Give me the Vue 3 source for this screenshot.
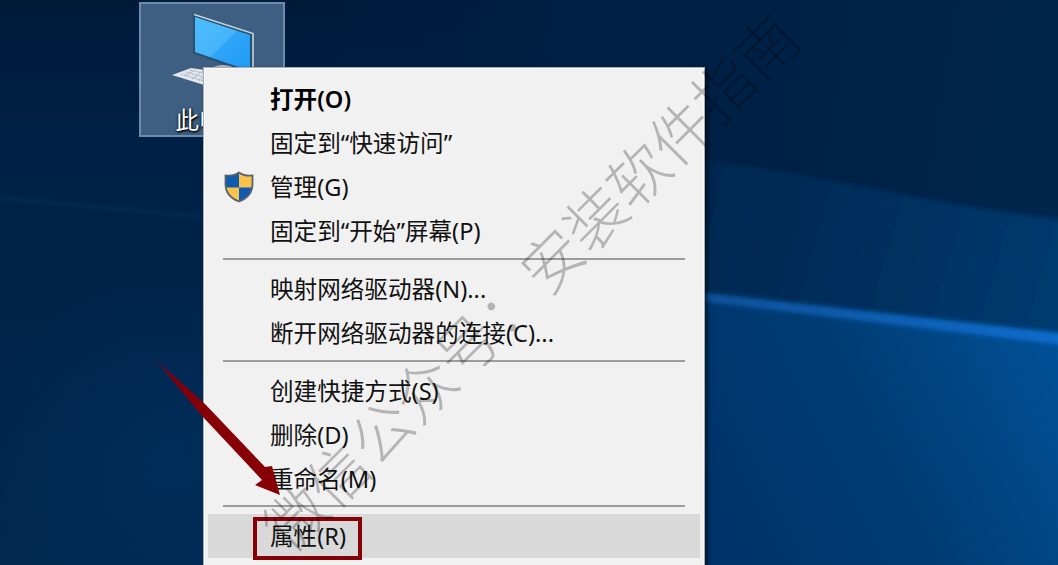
<script setup>
// 右键菜单，按分隔线分组
const groups = [
  [
    { label: '打开(O)', bold: true },
    { label: '固定到“快速访问”' },
    { label: '管理(G)', shield: true },
    { label: '固定到“开始”屏幕(P)' },
  ],
  [
    { label: '映射网络驱动器(N)...' },
    { label: '断开网络驱动器的连接(C)...' },
  ],
  [
    { label: '创建快捷方式(S)' },
    { label: '删除(D)' },
    { label: '重命名(M)' },
  ],
  [{ label: '属性(R)', active: true }],
];
</script>

<template>
  <div class="desktop">
    <!-- 壁纸 -->
    <svg class="wallpaper" viewBox="0 0 1058 565">
      <defs>
        <linearGradient id="base" x1="0" y1="0" x2="0" y2="1">
          <stop offset="0" stop-color="#001a3a" />
          <stop offset="0.25" stop-color="#002045" />
          <stop offset="1" stop-color="#002850" />
        </linearGradient>
        <radialGradient id="left" gradientUnits="userSpaceOnUse" cx="170" cy="460" r="190">
          <stop offset="0" stop-color="#003060" stop-opacity="0.7" />
          <stop offset="1" stop-color="#003060" stop-opacity="0" />
        </radialGradient>
        <linearGradient id="top" gradientUnits="userSpaceOnUse" x1="300" y1="0" x2="1058" y2="120">
          <stop offset="0" stop-color="#001e42" stop-opacity="0" />
          <stop offset="0.35" stop-color="#001f44" />
          <stop offset="0.7" stop-color="#002147" />
          <stop offset="1" stop-color="#00264c" />
        </linearGradient>
        <linearGradient id="mid" gradientUnits="userSpaceOnUse" x1="700" y1="200" x2="1058" y2="300">
          <stop offset="0" stop-color="#002850" />
          <stop offset="0.5" stop-color="#002f5e" />
          <stop offset="1" stop-color="#003b70" />
        </linearGradient>
        <linearGradient id="low" gradientUnits="userSpaceOnUse" x1="700" y1="520" x2="1058" y2="350">
          <stop offset="0" stop-color="#003368" />
          <stop offset="0.5" stop-color="#003c74" />
          <stop offset="1" stop-color="#005096" />
        </linearGradient>
        <linearGradient id="beam" gradientUnits="userSpaceOnUse" x1="700" y1="0" x2="1058" y2="0">
          <stop offset="0" stop-color="#0a5098" />
          <stop offset="1" stop-color="#0a6ccc" />
        </linearGradient>
        <filter id="soft" x="-10%" y="-50%" width="120%" height="200%">
          <feGaussianBlur stdDeviation="2" />
        </filter>
      </defs>
      <rect width="1058" height="565" fill="url(#base)" />
      <rect width="420" height="565" fill="url(#left)" />
      <path d="M300 0H1058V230H300Z" fill="url(#top)" />
      <path d="M690 159Q760 166 880 190T1070 220V360H690Z" fill="url(#mid)" filter="url(#soft)" />
      <path d="M690 296L1070 338V580H690Z" fill="url(#low)" />
      <path d="M690 291L1070 334V346L690 300Z" fill="url(#beam)" filter="url(#soft)" />
      <path d="M0 198L204 217" stroke="#0a3560" stroke-width="5" opacity="0.35" filter="url(#soft)" />
    </svg>

    <!-- 此电脑 -->
    <div class="shortcut">
      <svg class="pc" viewBox="0 0 90 80">
        <defs>
          <linearGradient id="screen" x1="0" y1="0" x2="1" y2="1">
            <stop offset="0" stop-color="#4dbcfb" />
            <stop offset="0.5" stop-color="#46b4fa" />
            <stop offset="0.52" stop-color="#2da5f8" />
            <stop offset="1" stop-color="#229af5" />
          </linearGradient>
        </defs>
        <path d="M22 10L82 29V72L22 49Z" fill="#26516f" />
        <path d="M23 10.500L82 29.500V66" fill="none" stroke="#c5d5de" stroke-width="1.600" />
        <path d="M24 13L79 31V67L24 48Z" fill="url(#screen)" />
        <path d="M40 64Q52 58 64 64L64 70H40Z" fill="#bcb9c8" />
        <path d="M1 71L20 64L48 68V86L30 80Z" fill="#e2e7ed" />
        <path d="M10 70L36 78M15 68L38 75M19 66L40 71M14 72L24 66M21 75L32 67M28 77L38 68" stroke="#a5adb6" stroke-width="1" stroke-dasharray="2 1" />
      </svg>
      <span class="shortcut-name">此电脑</span>
    </div>

    <div class="menu">
      <div v-for="(group, i) in groups" :key="i" class="group">
        <div v-for="item in group" :key="item.label" class="item" :class="{ bold: item.bold, active: item.active }">
          <span class="icon">
            <svg v-if="item.shield" viewBox="0 0 30 32">
              <path d="M15 1.500C11 4.500 6 5 1.500 4.500V13C1.500 22 7 27.500 15 30.500Z" fill="#f9c24c" />
              <path d="M15 1.500C19 4.500 24 5 28.500 4.500V13C28.500 22 23 27.500 15 30.500Z" fill="#0e5bb0" />
              <path d="M15 1.500C11 4.500 6 5 1.500 4.500V13L2 16.500H15Z" fill="#0e5bb0" />
              <path d="M15 1.500C19 4.500 24 5 28.500 4.500V13L28 16.500H15Z" fill="#f9c24c" />
              <path d="M15 1.500C11 4.500 6 5 1.500 4.500V13C1.500 22 7 27.500 15 30.500C23 27.500 28.500 22 28.500 13V4.500C24 5 19 4.500 15 1.500Z" fill="none" stroke="#56636b" stroke-width="1.800" />
            </svg>
          </span>
          <span class="label">{{ item.label }}</span>
        </div>
      </div>
    </div>

    <!-- 红色箭头和方框 -->
    <svg class="arrow" viewBox="0 0 1058 565">
      <defs>
        <linearGradient id="red" gradientUnits="userSpaceOnUse" x1="153" y1="357" x2="205" y2="410">
          <stop offset="0" stop-color="#7a0010" stop-opacity="0.2" />
          <stop offset="0.4" stop-color="#7a0010" />
          <stop offset="1" stop-color="#860006" />
        </linearGradient>
      </defs>
      <path d="M153 357L205 404L265 467L272 466L280 495L255 485L262 480L203 417Z" fill="url(#red)" />
    </svg>
    <div class="frame"></div>

    <div class="watermark">微信公众号：安装软件指南</div>
  </div>
</template>

<style>
body { margin: 0; overflow: hidden; }
</style>

<style scoped>
.desktop { position: relative; width: 1058px; height: 565px; overflow: hidden; font-family: "Noto Sans", "Noto Sans CJK SC", sans-serif; }
.wallpaper, .arrow { position: absolute; left: 0; top: 0; width: 1058px; height: 565px; }

.shortcut { position: absolute; left: 139px; top: 2px; width: 146px; height: 135px; box-sizing: border-box; border: 2px solid #6c8cab; background: #3e5f82; display: flex; flex-direction: column; align-items: center; }
.pc { width: 90px; height: 80px; margin-left: 8px; overflow: visible; }
.shortcut-name { margin-top: 19px; margin-right: 4px; color: #fff; font-size: 23.5px; line-height: 34px; letter-spacing: -0.5px; text-shadow: 1px 1px 2px #000, 0 1px 3px #000; }

.menu { position: absolute; left: 203px; top: 67px; width: 502px; height: 520px; box-sizing: border-box; padding: 9px 4px; background: #f1f1f1; border: 1px solid #a7adb5; box-shadow: inset 0 0 0 1px #fafafa, 3px 2px 4px rgba(0, 0, 0, 0.5); }
.group + .group { position: relative; padding-top: 14px; }
.group + .group::before { content: ""; position: absolute; left: 15px; right: 15px; top: 5px; height: 2px; background: #9c9c9c; }
.group:last-child { margin-top: -1px; }
.item { display: flex; align-items: center; height: 44px; font-size: 23.6px; color: #111; white-space: nowrap; }
.item.bold { font-weight: 600; color: #000; }
.item.active { background: #d9d9d9; }
.icon { width: 30px; height: 32px; margin-left: 16px; margin-right: 16px; }
.icon svg { display: block; width: 30px; height: 32px; }
.label { line-height: 42px; margin-top: -1px; }

.frame { position: absolute; left: 253px; top: 517px; width: 109px; height: 43px; box-sizing: border-box; border: 4px solid #860008; }
.watermark { position: absolute; left: 529px; top: 280px; transform: translate(-50%, -50%) rotate(-45deg); font-family: "Noto Sans CJK SC", sans-serif; font-size: 60.5px; line-height: 0.9; font-weight: 200; color: rgba(0, 0, 0, 0.25); white-space: nowrap; }
</style>
